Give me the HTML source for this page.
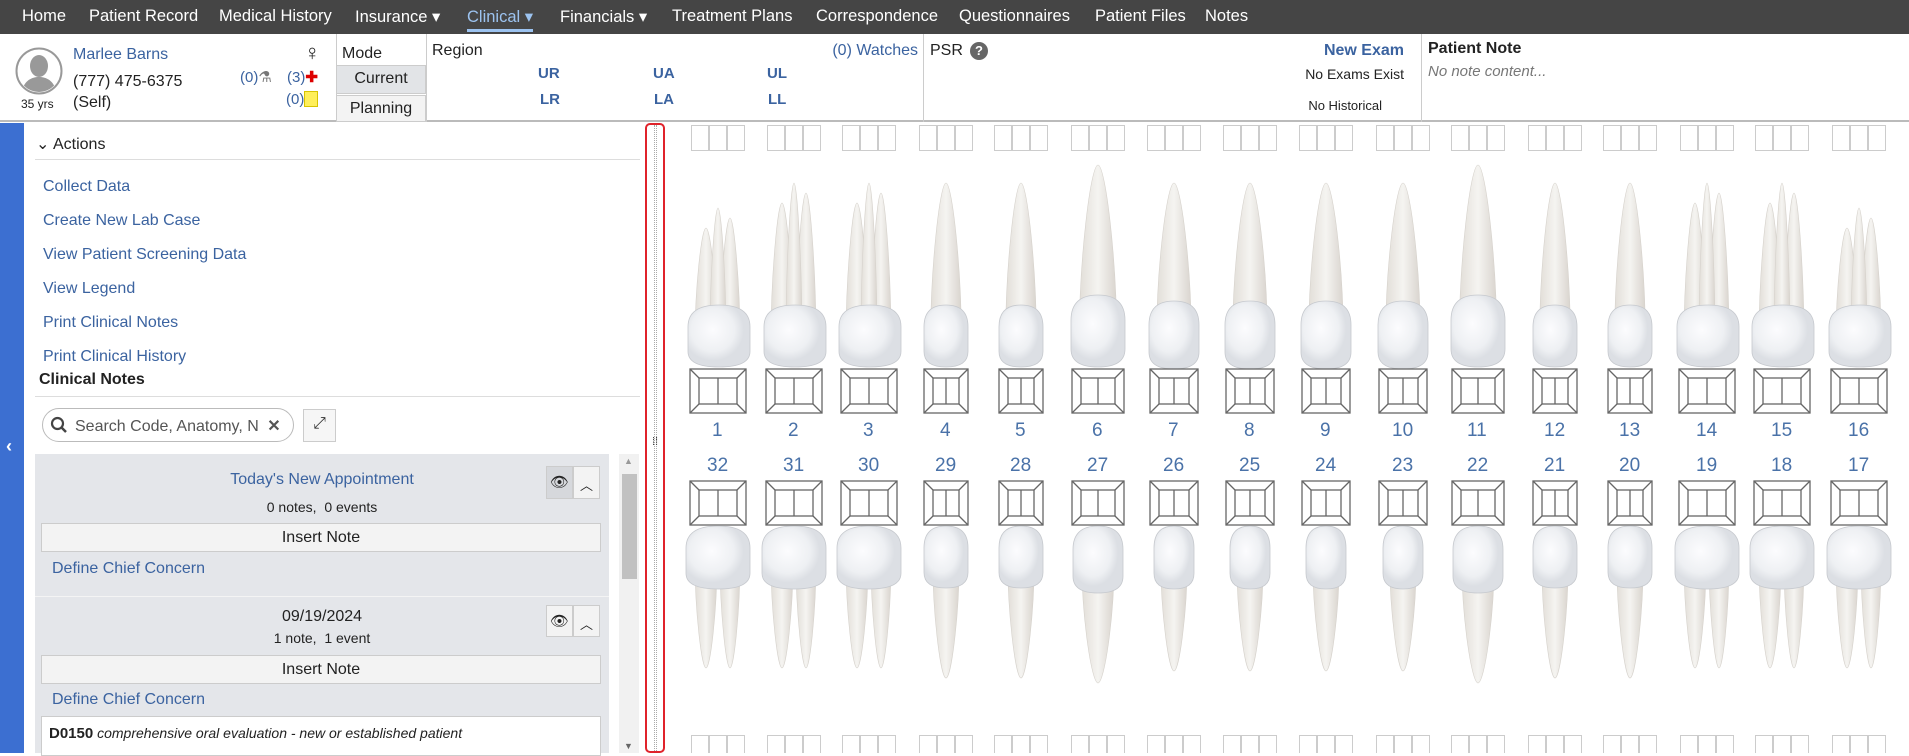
<!DOCTYPE html>
<html><head><meta charset="utf-8"><style>
*{box-sizing:border-box;margin:0;padding:0}
body{width:1909px;height:753px;overflow:hidden;background:#fff;font-family:"Liberation Sans",sans-serif;color:#222;position:relative;font-size:16px}
.a{position:absolute;white-space:nowrap}
.nav{position:absolute;left:0;top:0;width:1909px;height:34px;background:#454545}
.nav span{position:absolute;top:7px;color:#fff;font-size:16.5px}
.lk{color:#3b63a0}
.hdr{position:absolute;left:0;top:34px;width:1909px;height:88px;border-bottom:2px solid #bbb}
.vs{position:absolute;top:34px;height:88px;border-left:1px solid #ccc}
.btn{position:absolute;background:#f3f3f3;border:1px solid #ccc;text-align:center}
</style></head><body>
<div class="nav">
<span style="left:22px">Home</span><span style="left:89px">Patient Record</span><span style="left:219px">Medical History</span><span style="left:355px">Insurance ▾</span><span style="left:467px;color:#9cc3f0;border-bottom:3px solid #9cc3f0;padding-bottom:2px">Clinical ▾</span><span style="left:560px">Financials ▾</span><span style="left:672px">Treatment Plans</span><span style="left:816px">Correspondence</span><span style="left:959px">Questionnaires</span><span style="left:1095px">Patient Files</span><span style="left:1205px">Notes</span>
</div>
<div class="hdr"></div>
<svg class="a" style="left:15px;top:47px" width="48" height="48" viewBox="0 0 48 48"><circle cx="24" cy="24" r="22.5" fill="#fff" stroke="#999" stroke-width="2"/><clipPath id="c"><circle cx="24" cy="24" r="21"/></clipPath><g clip-path="url(#c)" fill="#999"><ellipse cx="24" cy="19" rx="9" ry="11"/><path d="M6 48 C8 34 16 30 24 30 C32 30 40 34 42 48Z"/></g></svg>
<div class="a" style="left:21px;top:97px;font-size:12px">35 yrs</div>
<div class="a lk" style="left:73px;top:46px;font-size:16px">Marlee Barns</div>
<div class="a" style="left:73px;top:73px;font-size:16px">(777) 475-6375</div>
<div class="a" style="left:73px;top:94px;font-size:16px">(Self)</div>
<div class="a" style="left:304px;top:40px;font-size:22px">♀</div>
<div class="a lk" style="left:240px;top:68px;font-size:15px">(0)<span style="color:#777">⚗</span></div>
<div class="a lk" style="left:287px;top:68px;font-size:15px">(3)<span style="color:#d00;font-weight:bold">✚</span></div>
<div class="a lk" style="left:286px;top:91px;font-size:15px">(0)<span style="display:inline-block;width:14px;height:16px;background:#ffef5a;border:1px solid #d8c400;vertical-align:-3px"></span></div>
<div class="vs" style="left:336px"></div>
<div class="a" style="left:342px;top:45px;font-size:16px">Mode</div>
<div class="btn" style="left:336px;top:65px;width:90px;height:29px;background:#e2e4e7;font-size:16px;padding-top:4px">Current</div>
<div class="btn" style="left:336px;top:95px;width:90px;height:27px;font-size:16px;padding-top:4px">Planning</div>
<div class="vs" style="left:426px"></div>
<div class="a" style="left:432px;top:42px;font-size:16px">Region</div>
<div class="a lk" style="left:538px;top:65px;font-weight:bold;font-size:15px">UR</div><div class="a lk" style="left:653px;top:65px;font-weight:bold;font-size:15px">UA</div><div class="a lk" style="left:767px;top:65px;font-weight:bold;font-size:15px">UL</div>
<div class="a lk" style="left:540px;top:91px;font-weight:bold;font-size:15px">LR</div><div class="a lk" style="left:654px;top:91px;font-weight:bold;font-size:15px">LA</div><div class="a lk" style="left:768px;top:91px;font-weight:bold;font-size:15px">LL</div>
<div class="a lk" style="right:991px;top:42px;font-size:16px">(0) Watches</div>
<div class="vs" style="left:923px"></div>
<div class="a" style="left:930px;top:42px;font-size:16px">PSR</div>
<div class="a" style="left:970px;top:42px;width:18px;height:18px;border-radius:50%;background:#666;color:#fff;font-size:13px;font-weight:bold;text-align:center;line-height:18px">?</div>
<div class="a lk" style="right:505px;top:42px;font-size:16px;font-weight:bold">New Exam</div>
<div class="a" style="right:505px;top:66px;font-size:14px">No Exams Exist</div>
<div class="a" style="right:527px;top:98px;font-size:13px">No Historical</div>
<div class="vs" style="left:1421px"></div>
<div class="a" style="left:1428px;top:40px;font-size:16px;font-weight:bold">Patient Note</div>
<div class="a" style="left:1428px;top:63px;font-size:15px;font-style:italic;color:#777">No note content...</div>

<div class="a" style="left:0;top:123px;width:24px;height:630px;background:#3c6fd1"></div>
<div class="a" style="left:6px;top:436px;color:#fff;font-size:18px;font-weight:bold">‹</div>
<div class="a" style="left:36px;top:134px;font-size:16px">⌄ Actions</div>
<div class="a" style="left:35px;top:159px;width:605px;border-top:1px solid #ddd"></div>
<div class="a lk" style="left:43px;top:170px;font-size:16px;line-height:34px">Collect Data<br>Create New Lab Case<br>View Patient Screening Data<br>View Legend<br>Print Clinical Notes<br>Print Clinical History</div>
<div class="a" style="left:39px;top:371px;font-size:16px;font-weight:bold">Clinical Notes</div>
<div class="a" style="left:35px;top:396px;width:605px;border-top:1px solid #ddd"></div>
<div class="a" style="left:42px;top:408px;width:252px;height:34px;border:1px solid #bbb;border-radius:17px;font-size:16px;color:#555;padding:7px 0 0 32px">Search Code, Anatomy, N <b style="color:#555;margin-left:4px">✕</b></div>
<svg class="a" style="left:50px;top:416px" width="18" height="18"><circle cx="7.5" cy="7.5" r="5.5" fill="none" stroke="#444" stroke-width="2.2"/><path d="M11.5 11.5L16 16" stroke="#444" stroke-width="2.5"/></svg>
<div class="btn" style="left:303px;top:409px;width:33px;height:33px;background:#f6f6f6;font-size:16px;padding-top:5px;color:#333">⤢</div>
<div class="a" style="left:35px;top:454px;width:574px;height:299px;background:#e4e6ea"></div>
<div class="a" style="left:35px;top:596px;width:574px;border-top:1px solid #f4f4f4"></div>
<div class="a" style="left:619px;top:454px;width:20px;height:299px;background:#f1f1f1"></div>
<div class="a" style="left:622px;top:474px;width:15px;height:105px;background:#c1c1c1"></div>
<div class="a" style="left:624px;top:456px;font-size:9px;color:#999">▲</div>
<div class="a" style="left:624px;top:741px;font-size:9px;color:#666">▼</div>
<div class="a lk" style="left:35px;width:574px;text-align:center;top:471px;font-size:16px">Today's New Appointment</div>
<div class="a" style="left:35px;width:574px;text-align:center;top:499px;font-size:14px">0 notes,&nbsp; 0 events</div>
<div class="btn" style="left:546px;top:466px;width:27px;height:33px;background:#d6d8dc;font-size:15px;padding-top:6px">👁</div>
<div class="btn" style="left:573px;top:466px;width:27px;height:33px;font-size:13px;padding-top:8px">︿</div>
<div class="btn" style="left:41px;top:523px;width:560px;height:29px;font-size:16px;padding-top:5px">Insert Note</div>
<div class="a lk" style="left:52px;top:560px;font-size:16px">Define Chief Concern</div>
<div class="a" style="left:35px;width:574px;text-align:center;top:608px;font-size:16px">09/19/2024</div>
<div class="a" style="left:35px;width:574px;text-align:center;top:630px;font-size:14px">1 note,&nbsp; 1 event</div>
<div class="btn" style="left:546px;top:605px;width:27px;height:32px;font-size:15px;padding-top:6px">👁</div>
<div class="btn" style="left:573px;top:605px;width:27px;height:32px;font-size:13px;padding-top:8px">︿</div>
<div class="btn" style="left:41px;top:655px;width:560px;height:29px;font-size:16px;padding-top:5px">Insert Note</div>
<div class="a lk" style="left:52px;top:691px;font-size:16px">Define Chief Concern</div>
<div class="a" style="left:41px;top:716px;width:560px;height:40px;background:#fff;border:1px solid #ccc;padding:8px 0 0 7px;font-size:14px"><b style="font-size:15px">D0150</b> <i>comprehensive oral evaluation - new or established patient</i></div>
<div class="a" style="left:645px;top:123px;width:20px;height:630px;border:2px solid #e0232b;border-radius:5px"></div>
<div class="a" style="left:654px;top:125px;width:3px;height:626px;border-left:1px dotted #aaa;border-right:1px dotted #aaa"></div>
<div class="a" style="left:652px;top:440px;font-size:11px;line-height:5px;color:#444">⁞⁞</div>
<svg id="chart" class="a" style="left:666px;top:123px" width="1243" height="630"></svg>
<div class="a lk" style="top:420px;left:0;width:1909px;height:60px;font-size:19px;color:#4a72a8">
<span class="a" style="left:712px">1</span><span class="a" style="left:788px">2</span><span class="a" style="left:863px">3</span><span class="a" style="left:940px">4</span><span class="a" style="left:1015px">5</span><span class="a" style="left:1092px">6</span><span class="a" style="left:1168px">7</span><span class="a" style="left:1244px">8</span><span class="a" style="left:1320px">9</span><span class="a" style="left:1392px">10</span><span class="a" style="left:1467px">11</span><span class="a" style="left:1544px">12</span><span class="a" style="left:1619px">13</span><span class="a" style="left:1696px">14</span><span class="a" style="left:1771px">15</span><span class="a" style="left:1848px">16</span>
<span class="a" style="top:35px;left:707px">32</span><span class="a" style="top:35px;left:783px">31</span><span class="a" style="top:35px;left:858px">30</span><span class="a" style="top:35px;left:935px">29</span><span class="a" style="top:35px;left:1010px">28</span><span class="a" style="top:35px;left:1087px">27</span><span class="a" style="top:35px;left:1163px">26</span><span class="a" style="top:35px;left:1239px">25</span><span class="a" style="top:35px;left:1315px">24</span><span class="a" style="top:35px;left:1392px">23</span><span class="a" style="top:35px;left:1467px">22</span><span class="a" style="top:35px;left:1544px">21</span><span class="a" style="top:35px;left:1619px">20</span><span class="a" style="top:35px;left:1696px">19</span><span class="a" style="top:35px;left:1771px">18</span><span class="a" style="top:35px;left:1848px">17</span>
</div>
<script>
var cx=[718,794,869,946,1021,1098,1174,1250,1326,1403,1478,1555,1630,1707,1782,1859];
var ty=['m','m','m','p','p','c','i','i','i','i','c','p','p','m','m','m'];
var W={m:56,p:44,c:52,i:48};
var s='<defs><linearGradient id="r" x1="0" x2="1"><stop offset="0" stop-color="#e2ded8"/><stop offset=".5" stop-color="#f5f4f1"/><stop offset="1" stop-color="#d9d4ce"/></linearGradient><radialGradient id="k" cx=".4" cy=".4"><stop offset="0" stop-color="#fcfcfe"/><stop offset=".7" stop-color="#eef0f3"/><stop offset="1" stop-color="#dcdfe4"/></radialGradient></defs>';
function box(x,y,w,h){var i=9;return '<g fill="none" stroke="#666" stroke-width="1.3"><rect x="'+(x-w/2)+'" y="'+y+'" width="'+w+'" height="'+h+'"/><rect x="'+(x-w/2+i)+'" y="'+(y+i)+'" width="'+(w-2*i)+'" height="'+(h-2*i)+'"/><path d="M'+(x-w/2)+' '+y+'l'+i+' '+i+'M'+(x+w/2)+' '+y+'l-'+i+' '+i+'M'+(x-w/2)+' '+(y+h)+'l'+i+' -'+i+'M'+(x+w/2)+' '+(y+h)+'l-'+i+' -'+i+'M'+x+' '+(y+i)+'V'+(y+h-i)+'"/></g>';}
function root(x,yc,yt,w){var m=yc+(yt-yc)*0.45;return '<path d="M'+(x-w/2)+' '+yc+' C'+(x-w/2)+' '+m+' '+(x-w*0.2)+' '+yt+' '+x+' '+yt+' C'+(x+w*0.2)+' '+yt+' '+(x+w/2)+' '+m+' '+(x+w/2)+' '+yc+'Z" fill="url(#r)" stroke="#d6d2cc" stroke-width=".6"/>';}
function crown(x,y1,y2,w){var h=y2-y1,l=x-w/2,r=x+w/2;return '<path d="M'+l+' '+(y1+h*0.35)+' Q'+l+' '+y1+' '+x+' '+y1+' Q'+r+' '+y1+' '+r+' '+(y1+h*0.35)+' L'+r+' '+(y2-h*0.25)+' Q'+r+' '+y2+' '+x+' '+y2+' Q'+l+' '+y2+' '+l+' '+(y2-h*0.25)+'Z" fill="url(#k)" stroke="#c6c9ce" stroke-width=".8"/>';}
for(var n=0;n<16;n++){var x=cx[n]-666,t=ty[n],w=W[t];
 for(var j=0;j<3;j++){s+='<rect x="'+(x-27+j*18+0.5)+'" y="2.5" width="17" height="25" fill="none" stroke="#ccc"/><rect x="'+(x-27+j*18+0.5)+'" y="612.5" width="17" height="25" fill="none" stroke="#ccc"/>';}
 var big=(n==5||n==10);
 if(t=='m'){var tp=(n==0||n==15)?85:60;s+=root(x-12,215,tp+20,22)+root(x+12,215,tp+10,20)+root(x,210,tp,16)+crown(x+1,182,244,w+6);}
 else if(t=='c'){s+=root(x,215,big?42:60,w*0.72)+crown(x,172,244,w+2);}
 else if(t=='p'){s+=root(x,215,60,w*0.7)+crown(x,182,244,w);}
 else {s+=root(x,212,60,w*0.72)+crown(x,178,246,w+2);}
 s+=box(x,246,w,44);
 s+=box(x,358,w,44);
 if(t=='m'){s+=root(x-12,440,545,22)+root(x+12,440,545,20)+crown(x,403,466,w+8);}
 else if(t=='c'){s+=root(x,440,560,w*0.62)+crown(x,403,470,w-2);}
 else if(t=='p'){s+=root(x,440,555,w*0.6)+crown(x,403,465,w);}
 else {s+=root(x,440,548,w*0.55)+crown(x,403,466,w-8);}
}
document.getElementById('chart').innerHTML=s;
</script>
</body></html>
